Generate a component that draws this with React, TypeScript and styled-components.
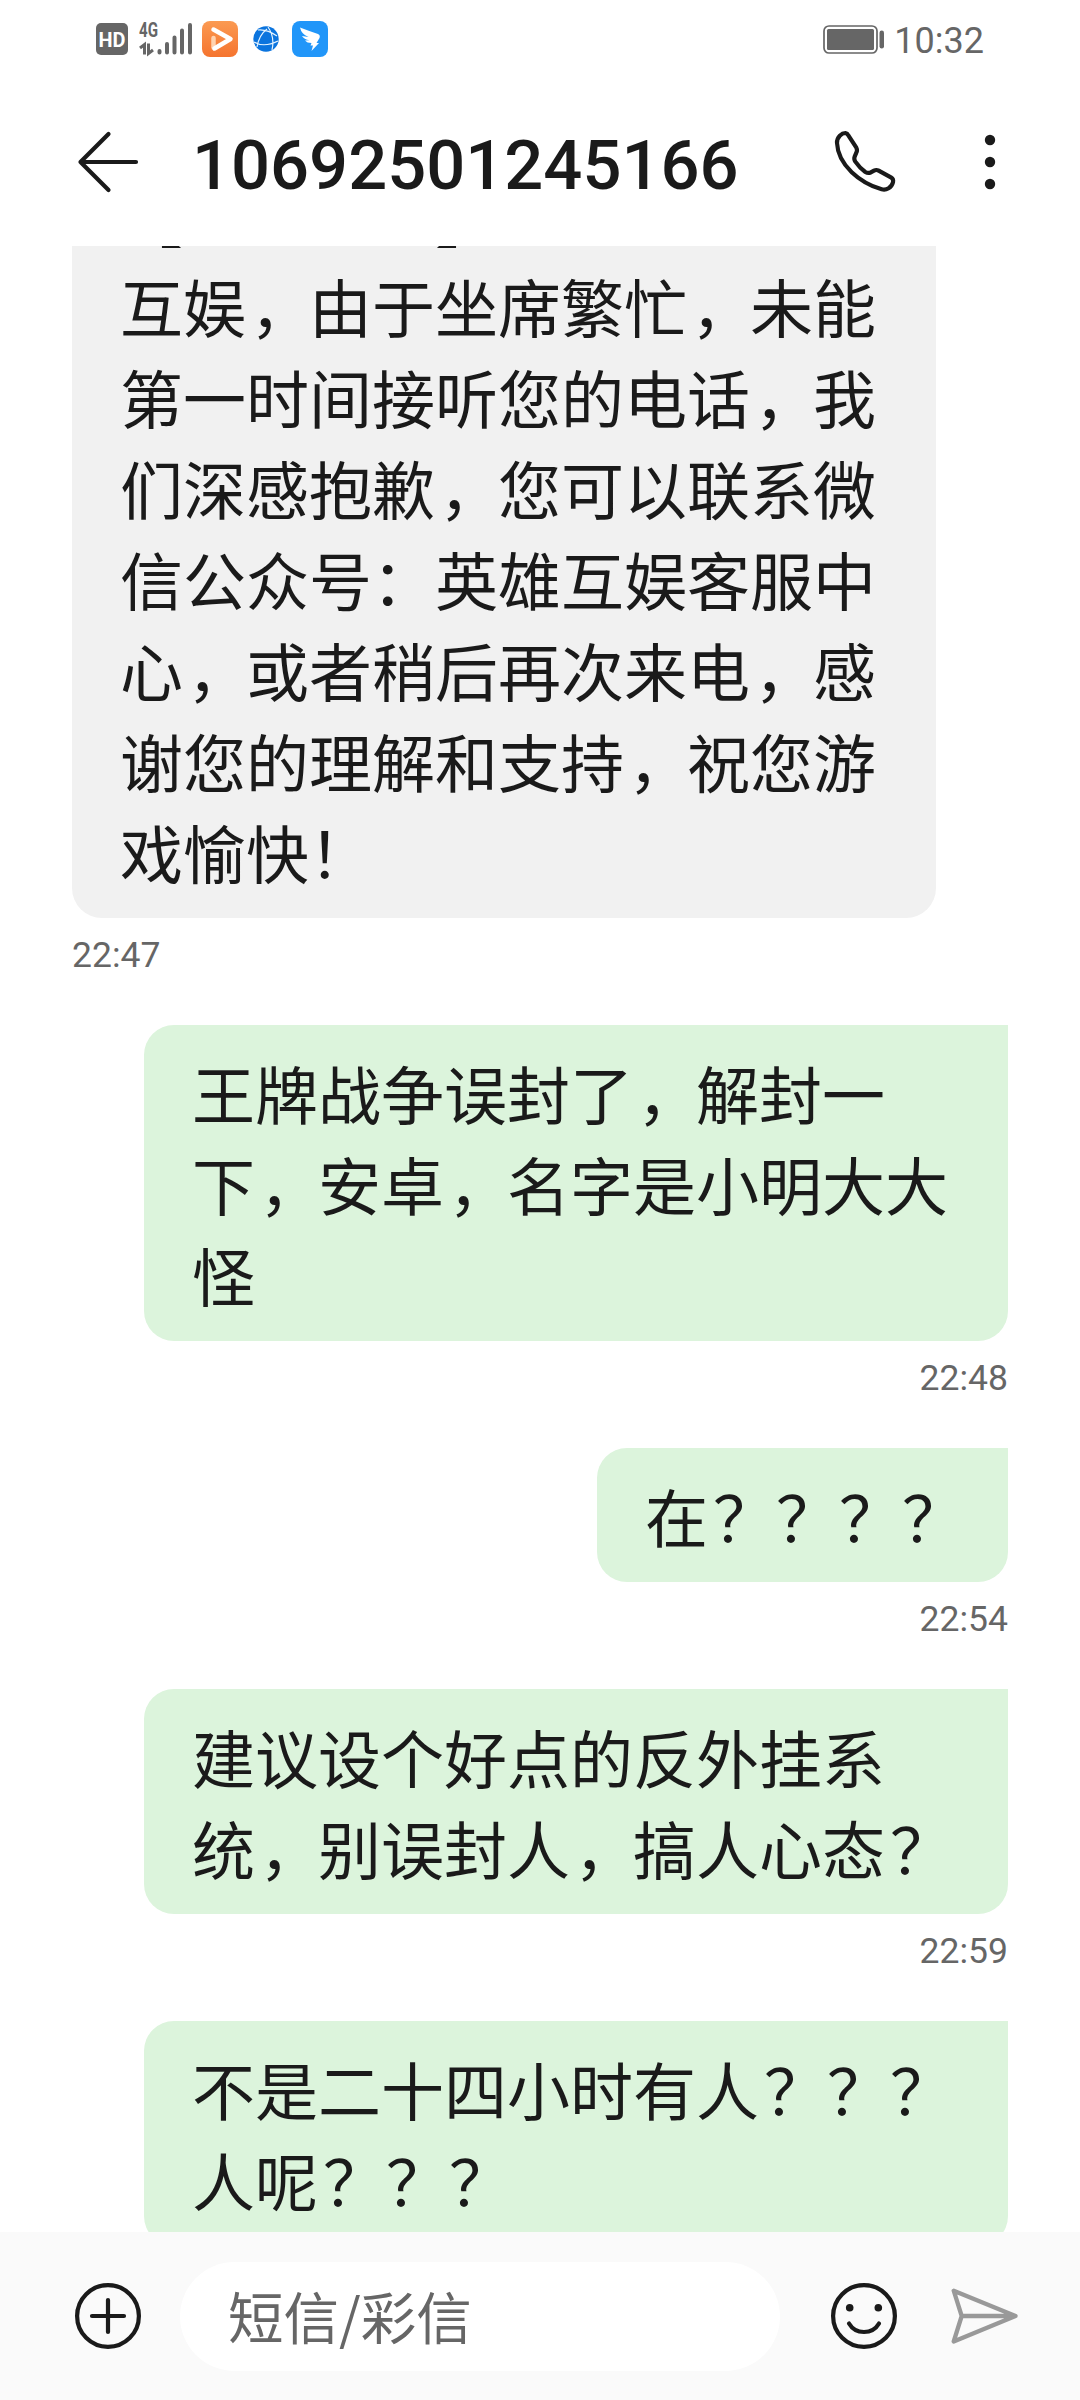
import React from "react";
import styled, { createGlobalStyle } from "styled-components";

const GlobalStyle = createGlobalStyle`
  * { box-sizing: border-box; }
  body { margin: 0; background: #fff; }
`;

const INK = "#1a1a1a";

const Screen = styled.main`
  display: flex;
  flex-direction: column;
  width: 1080px;
  height: 2400px;
  overflow: hidden;
  background: #fff;
  color: ${INK};
  font-family: Roboto, "Noto Sans CJK SC", sans-serif;
`;

const StatusBar = styled.div`
  display: flex;
  align-items: center;
  flex: none;
  height: 78px;
  padding: 0 96px;
`;

const StatusGroup = styled.div<{ $end?: boolean }>`
  display: flex;
  align-items: center;
  margin-left: ${(p) => (p.$end ? "auto" : "0")};
  gap: ${(p) => (p.$end ? "9px" : "0")};
`;

const Clock = styled.span`
  font-size: 36px;
  line-height: 42px;
  color: #666;
  padding-top: 3px;
`;

const Icon = styled.svg<{ $gap?: number }>`
  display: block;
  flex: none;
  margin-left: ${(p) => p.$gap ?? 0}px;
  overflow: visible;
`;

const TitleBar = styled.header`
  display: flex;
  align-items: center;
  flex: none;
  height: 168px;
  padding: 0 82px 0 75px;
`;

const Title = styled.h1`
  flex: 1;
  margin: 0;
  padding: 8px 0 0 51px;
  font-size: 68.7px;
  font-weight: 500;
  line-height: 82px;
`;

const Thread = styled.section`
  display: flex;
  flex-direction: column;
  flex: none;
  height: 1986px;
  padding: 0 72px;
  overflow: hidden;
`;

const Message = styled.article<{ $mine: boolean; $scrolled?: boolean }>`
  display: flex;
  flex-direction: column;
  flex: none;
  align-items: ${(p) => (p.$mine ? "flex-end" : "flex-start")};
  margin-top: ${(p) => (p.$scrolled ? "-99px" : "0")};
`;

const Bubble = styled.p<{ $mine: boolean }>`
  margin: 0;
  max-width: 864px;
  padding: 21px 48px 22px;
  border-radius: ${(p) => (p.$mine ? "30px 0 30px 30px" : "0 30px 30px 30px")};
  background: ${(p) => (p.$mine ? "#dcf4dc" : "#f1f1f1")};
  font-family: "Noto Sans CJK SC", sans-serif;
  font-size: 63px;
  line-height: 91px;
`;

const Lead = styled.span`
  display: block;
  height: 91px;
  line-height: 84px;
`;

const Bracket = styled.span`
  display: inline-block;
  line-height: 84px;
  padding-top: 5px;
  vertical-align: top;
`;

const Punct = styled.span<{ $shift: number }>`
  padding-left: ${(p) => p.$shift}px;
  letter-spacing: -${(p) => p.$shift}px;
`;

const Stamp = styled.time`
  height: 107px;
  padding-top: 16px;
  font-size: 35.5px;
  line-height: 42px;
  color: #666;
`;

const Composer = styled.footer`
  display: flex;
  align-items: center;
  flex: none;
  height: 168px;
  padding: 0 60px 0 75px;
  background: #fafafa;
`;

const Field = styled.div`
  flex: none;
  width: 600px;
  height: 109px;
  margin-left: 39px;
  padding: 0 48px;
  border-radius: 55px;
  background: #fff;
  color: #666;
  font-family: "Noto Sans CJK SC", sans-serif;
  font-size: 55.5px;
  line-height: 107px;
`;

const HdIcon = () => (
  <Icon width="32" height="32" viewBox="0 0 32 32">
    <rect width="32" height="32" rx="5" fill="#666" />
    <text x="16" y="23.5" textAnchor="middle" fontFamily="Roboto, sans-serif" fontSize="21" fontWeight="700" fill="#fff" textLength="27" lengthAdjust="spacingAndGlyphs">HD</text>
  </Icon>
);

const SignalIcon = () => (
  <Icon $gap={11} width="54" height="36" viewBox="0 0 54 36">
    <text x="0" y="15.5" fontFamily="Roboto, sans-serif" fontSize="20" fontWeight="700" fill="#666" textLength="19" lengthAdjust="spacingAndGlyphs">4G</text>
    <path d="M5.5 33.5V23.5L1 27M9.5 22.5V32.5L14 29" fill="none" stroke="#666" strokeWidth="3" />
    <g stroke="#666" strokeWidth="4" strokeLinecap="round">
      <path d="M20.5 30V31.5M28 23V31.5M35.5 16.5V31.5M43 9.5V31.5M51 4V31.5" />
    </g>
  </Icon>
);

const VideoIcon = () => (
  <Icon $gap={9} width="36" height="36" viewBox="0 0 36 36">
    <defs>
      <linearGradient id="videoBg" x1="0" y1="0" x2="0" y2="1">
        <stop offset="0" stopColor="#fb9a52" />
        <stop offset="1" stopColor="#f5742f" />
      </linearGradient>
    </defs>
    <rect width="36" height="36" rx="8" fill="url(#videoBg)" />
    <path d="M11.5 17V26.5" stroke="#ffd3b0" strokeWidth="4.5" strokeLinecap="round" />
    <path d="M11.5 8.5L28.5 18L12.5 27.5" fill="none" stroke="#fff" strokeWidth="4.5" strokeLinecap="round" strokeLinejoin="round" />
  </Icon>
);

const GlobeIcon = () => (
  <Icon $gap={14.5} width="26" height="26" viewBox="0 0 26 26">
    <circle cx="13" cy="13" r="12.7" fill="#0b74de" />
    <g fill="none" stroke="#e4f3ff" strokeWidth="1.2">
      <path d="M5 4Q14 3 24 10M15 1Q22 11 19 24M14 3Q6 9 4 21M1 16Q11 22 25 15" />
    </g>
  </Icon>
);

const WingIcon = () => (
  <Icon $gap={13.5} width="36" height="36" viewBox="0 0 36 36">
    <rect width="36" height="36" rx="8" fill="#2196f9" />
    <path d="M8 6.5Q17 10 26 13Q28.5 14 27.5 17L24.5 22H27L19.5 30L21 24.5H18.5L19.5 22Q15 22 13 19.5L17.5 19.3Q12 18.5 10 15L16.5 16Q9.5 13.5 8 6.5Z" fill="#fff" />
  </Icon>
);

const BatteryIcon = () => (
  <Icon width="62" height="29" viewBox="0 0 62 29">
    <rect x="1" y="1" width="53" height="27" rx="5" fill="none" stroke="#666" strokeWidth="1.7" />
    <rect x="4" y="4" width="47" height="21" rx="1.5" fill="#666" />
    <rect x="56.5" y="5.5" width="4.5" height="18" rx="2.2" fill="#666" />
  </Icon>
);

const BackIcon = () => (
  <Icon width="66" height="66" viewBox="0 0 66 66">
    <path d="M33.5 5L5.5 33L33.5 61M5.5 33H61" fill="none" stroke={INK} strokeWidth="4.2" strokeLinecap="round" strokeLinejoin="round" />
  </Icon>
);

const PhoneIcon = () => (
  <Icon width="66" height="66" viewBox="875 56 198 198">
    <path
      d="M890 98C889 80 905 68 915 68Q921 69 924 75L948 112Q952 119 948 127L943 139Q940 146 945 154Q958 173 975 185Q982 189 990 187L1001 181Q1008 177 1015 181L1053 202Q1060 206 1058 216C1054 232 1038 241 1024 237C960 218 893 165 890 98Z"
      fill="none"
      stroke={INK}
      strokeWidth="12.5"
      strokeLinejoin="round"
    />
  </Icon>
);

const MoreIcon = () => (
  <Icon $gap={84} width="16" height="66" viewBox="0 0 16 66">
    <g fill={INK}>
      <circle cx="8" cy="11" r="5.2" />
      <circle cx="8" cy="33" r="5.2" />
      <circle cx="8" cy="55" r="5.2" />
    </g>
  </Icon>
);

const AddIcon = () => (
  <Icon width="66" height="66" viewBox="0 0 66 66" fill="none" stroke={INK} strokeWidth="4.2" strokeLinecap="round">
    <circle cx="33" cy="33" r="30.9" />
    <path d="M17 33H49M33 17V49" />
  </Icon>
);

const SmileIcon = () => (
  <Icon $gap={51} width="66" height="66" viewBox="0 0 66 66">
    <circle cx="33" cy="33" r="30.9" fill="none" stroke={INK} strokeWidth="4.2" />
    <circle cx="18.7" cy="24.7" r="3.8" fill={INK} />
    <circle cx="47.3" cy="24.7" r="3.8" fill={INK} />
    <path d="M18 40.5Q23 49 33 49T48 40.5" fill="none" stroke={INK} strokeWidth="4.2" strokeLinecap="round" />
  </Icon>
);

const SendIcon = () => (
  <Icon $gap={54} width="66" height="66" viewBox="0 0 66 66">
    <path d="M2.7 7.7L64.5 33L2.7 58.5L10.7 33ZM10.7 33H64.5" fill="none" stroke="#999" strokeWidth="4.3" strokeLinecap="round" strokeLinejoin="round" />
  </Icon>
);

interface Sms {
  signature?: string;
  lead?: string;
  text: string;
  time: string;
  mine: boolean;
}

const messages: Sms[] = [
  {
    signature: "英雄互娱",
    lead: "欢迎致电英雄",
    text: "互娱，由于坐席繁忙，未能第一时间接听您的电话，我们深感抱歉，您可以联系微信公众号：英雄互娱客服中心，或者稍后再次来电，感谢您的理解和支持，祝您游戏愉快！",
    time: "22:47",
    mine: false,
  },
  { text: "王牌战争误封了，解封一下，安卓，名字是小明大大怪", time: "22:48", mine: true },
  { text: "在？？？？", time: "22:54", mine: true },
  { text: "建议设个好点的反外挂系统，别误封人，搞人心态？", time: "22:59", mine: true },
  { text: "不是二十四小时有人？？？人呢？？？", time: "23:05", mine: true },
];

// Centres commas and question marks a little further into their cell.
const spaced = (text: string) =>
  text.split(/([，？])/).map((part, i) =>
    i % 2 ? (
      <Punct key={i} $shift={part === "，" ? 4 : 5}>
        {part}
      </Punct>
    ) : (
      part
    ),
  );

export default function App() {
  return (
    <Screen lang="zh-CN">
      <GlobalStyle />
      <StatusBar>
        <StatusGroup>
          <HdIcon />
          <SignalIcon />
          <VideoIcon />
          <GlobeIcon />
          <WingIcon />
        </StatusGroup>
        <StatusGroup $end>
          <BatteryIcon />
          <Clock>10:32</Clock>
        </StatusGroup>
      </StatusBar>
      <TitleBar>
        <BackIcon />
        <Title>10692501245166</Title>
        <PhoneIcon />
        <MoreIcon />
      </TitleBar>
      <Thread>
        {messages.map((m, i) => (
          <Message key={i} $mine={m.mine} $scrolled={i === 0}>
            <Bubble $mine={m.mine}>
              {m.signature && (
                <Lead>
                  <Bracket>【</Bracket>
                  {m.signature}
                  <Bracket>】</Bracket>
                  {m.lead}
                </Lead>
              )}
              {spaced(m.text)}
            </Bubble>
            {i < messages.length - 1 && <Stamp>{m.time}</Stamp>}
          </Message>
        ))}
      </Thread>
      <Composer>
        <AddIcon />
        <Field>短信/彩信</Field>
        <SmileIcon />
        <SendIcon />
      </Composer>
    </Screen>
  );
}
